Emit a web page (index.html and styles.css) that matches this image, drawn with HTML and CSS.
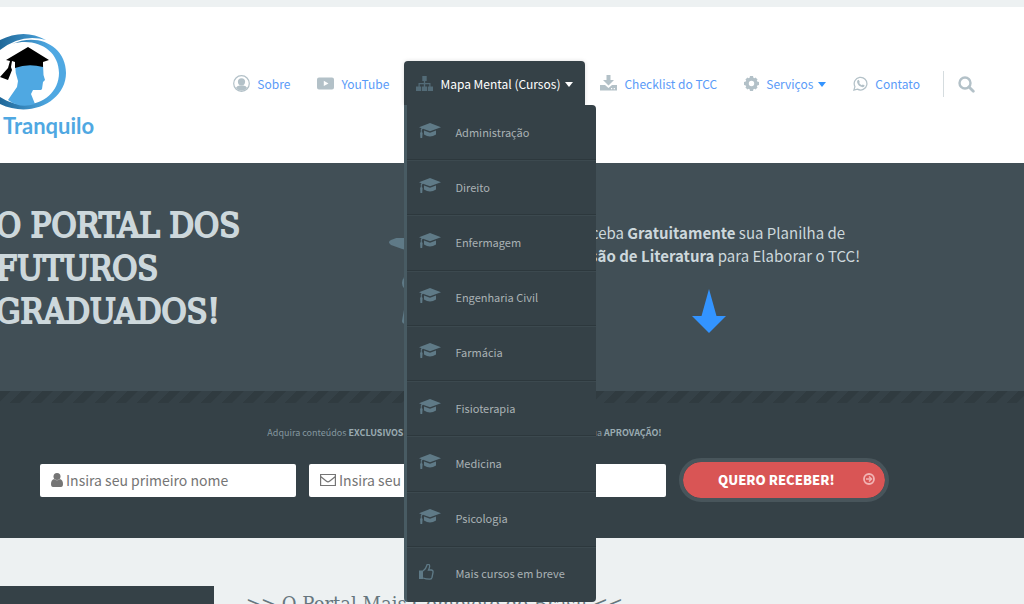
FILE: index.html
```html
<!DOCTYPE html>
<html lang="pt-BR">
<head>
<meta charset="utf-8">
<title>TCC Tranquilo</title>
<link rel="stylesheet" href="styles.css">
</head>
<body>
<svg class="sprite" aria-hidden="true">
  <symbol id="cap" viewBox="0 0 22 16"><path d="M11 0 22 4.2 11 8.2 4 5.7 2.8 6.8V9l.8 1-.4 5H1.400l-.3-5 .7-1V6.200L2.600 5.200 0 4.200Z"/><path d="M5 7.500 11 9.700 17 7.500V11.500Q11 15.500 5 11.500Z"/></symbol>
</svg>
<div class="page">
  <header class="header">
    <a class="logo" href="#">
      <svg class="logo-mark" viewBox="0 0 66 78" aria-hidden="true">
        <defs><linearGradient id="ring" gradientUnits="userSpaceOnUse" x1="0" x2="50" y1="0" y2="0"><stop offset="0" stop-color="#1f6899"/><stop offset="1" stop-color="#4fa8e2"/></linearGradient></defs>
        <path d="M0 7Q24-5 46 7 22 0 0 17Z" fill="url(#ring)"/>
        <path d="M12 11C38-1 66 13 66 40 66 68 31 86 0 71V64C28 82 59 66 59 40 59 17 36 4 12 11Z" fill="url(#ring)"/>
        <path d="M15 31H43L43.500 42 45 47 43 49 42 56 41 57H33L31 61 35 71Q20 76 8 67L17 54 18 48Q15 40 15 31Z" fill="#4fa8e2"/>
        <path d="M28 14 49 27 43 29V34Q28 30 15 35V29L12 28 11 34 12 37 8 47 0 44 8 35 10 28 6 27Z"/>
      </svg>
      <span class="logo-text">Tranquilo</span>
    </a>
    <nav class="nav">
      <a class="nav-item" href="#"><svg class="icon" viewBox="0 0 17 17"><circle cx="8.500" cy="8.500" r="7.800" fill="none" stroke="currentColor" stroke-width="1.200"/><circle cx="8.500" cy="6.800" r="3.600"/><path d="M2.800 13Q4 10.500 6.500 10.500H10.500Q13 10.500 14.200 13 8.500 18.500 2.800 13Z"/></svg>Sobre</a>
      <a class="nav-item" href="#"><svg class="icon" viewBox="0 0 17 17"><path fill-rule="evenodd" d="M2 2.500H15Q17 2.500 17 4.500V12.500Q17 14.500 15 14.500H2Q0 14.500 0 12.500V4.500Q0 2.500 2 2.500ZM6.800 5.800V11L11.500 8.400Z"/></svg>YouTube</a>
      <div class="nav-group">
        <a class="nav-item active" href="#"><svg class="icon" viewBox="0 0 17 17"><path d="M6.300 1H10.700V6H9.200V8H14.500V11.500H17V16H11.800V11.500H13.300V9.200H9.200V11.500H11V16H6V11.500H7.800V9.200H3.700V11.500H5.200V16H0V11.500H2.500V8H7.800V6H6.300Z"/></svg>Mapa Mental (Cursos)<span class="caret"></span></a>
        <ul class="menu">
          <li><a href="#"><svg class="cap"><use href="#cap"/></svg>Administração</a></li>
          <li><a href="#"><svg class="cap"><use href="#cap"/></svg>Direito</a></li>
          <li><a href="#"><svg class="cap"><use href="#cap"/></svg>Enfermagem</a></li>
          <li><a href="#"><svg class="cap"><use href="#cap"/></svg>Engenharia Civil</a></li>
          <li><a href="#"><svg class="cap"><use href="#cap"/></svg>Farmácia</a></li>
          <li><a href="#"><svg class="cap"><use href="#cap"/></svg>Fisioterapia</a></li>
          <li><a href="#"><svg class="cap"><use href="#cap"/></svg>Medicina</a></li>
          <li><a href="#"><svg class="cap"><use href="#cap"/></svg>Psicologia</a></li>
          <li><a href="#"><svg class="cap" viewBox="0 0 22 16"><path d="M0 6.500H4V15H0Z"/><path d="M4 7Q7 5 8 1Q8.500-.5 10 .5 11.500 2 9.500 6H12.500Q14.500 6.500 14 8.500L13 13.500Q12.500 15.200 10.500 15.200 7 15.200 4 14" fill="none" stroke="currentColor" stroke-width="1.300"/></svg>Mais cursos em breve</a></li>
        </ul>
      </div>
      <a class="nav-item" href="#"><svg class="icon" viewBox="0 0 17 17"><path fill-rule="evenodd" d="M6.500 0H10.500V5H14L8.500 10.500 3 5H6.500ZM0 10H5L8.500 13 12 10H17V15.500H0ZM11 13V14.200H12.200V13ZM13.700 13V14.200H14.900V13Z"/></svg>Checklist do TCC</a>
      <a class="nav-item" href="#"><svg class="icon small" viewBox="1 1 15 15"><circle cx="8.500" cy="8.500" r="4.400" fill="none" stroke="currentColor" stroke-width="3.400"/><path d="M7 1H10L10.500 3H6.500ZM7 16H10L10.500 14H6.500ZM1 7V10L3 10.500V6.500ZM16 7V10L14 10.500V6.500ZM2.400 4.500 4.500 2.400 7 4.200 4.200 7ZM14.600 4.500 12.500 2.400 10 4.200 12.800 7ZM2.400 12.500 4.500 14.600 7 12.800 4.200 10ZM14.600 12.500 12.500 14.600 10 12.800 12.800 10Z"/></svg>Serviços<span class="caret"></span></a>
      <a class="nav-item" href="#"><svg class="icon small" viewBox="0 0 17 17"><path d="M1 16 2.200 12A7.200 7.200 0 1 1 5 14.900Z" fill="none" stroke="currentColor" stroke-width="1.400"/><path d="M5.200 4.700 6.500 4.200 7.700 6.700 7 7.800Q8 9.600 10 10.400L11 9.500 13.200 10.600Q13 12.800 10.800 12.800 6 12 4.700 7.500 4.300 6 5.200 4.700Z"/></svg>Contato</a>
      <button class="search" type="button" aria-label="Buscar"><svg class="icon" viewBox="0 0 17 17"><circle cx="7" cy="7" r="5.500" fill="none" stroke="currentColor" stroke-width="2.400"/><path d="M11 11 15.300 15.300" stroke="currentColor" stroke-width="2.800" stroke-linecap="round"/></svg></button>
    </nav>
  </header>

  <section class="hero">
    <h1 class="hero-title">O PORTAL DOS<br>FUTUROS<br>GRADUADOS!</h1>
    <svg class="hero-figure" viewBox="0 0 40 90" aria-hidden="true"><path d="M2 2Q12-2 24-5V14Q12 11 2 7 -2 4 2 2Z"/><circle cx="21" cy="45" r="8"/><path d="M16 66 13 83Q13 86 17 86H30V66Z"/></svg>
    <div class="hero-offer">
      <p>Receba <b>Gratuitamente</b> sua Planilha de<br><b>Revisão de Literatura</b> para Elaborar o TCC!</p>
      <svg class="arrow" viewBox="0 0 34 44" aria-hidden="true"><path d="M17 0 24.500 27H34L17 44 0 27H9.500Z"/></svg>
    </div>
  </section>

  <section class="signup">
    <p class="signup-note">Adquira conteúdos <b>EXCLUSIVOS</b> e gratuitos que vão te ajudar a conquistar a sua <b>APROVAÇÃO!</b></p>
    <form class="signup-form">
      <label class="field"><svg viewBox="0 0 12 14"><circle cx="6" cy="3.500" r="3.500"/><path d="M3 6Q6 8.500 9 6 12 7 12 11 12 14 10 14H2Q0 14 0 11 0 7 3 6Z"/></svg><input type="text" placeholder="Insira seu primeiro nome" aria-label="Nome"></label>
      <label class="field"><svg class="mail" viewBox="0 0 16 14"><path d="M.6 1.500H15.400V12.500H.6ZM.6 3.500 6.500 8.300Q8 9.500 9.500 8.300L15.400 3.500" fill="none" stroke="currentColor" stroke-width="1.200"/></svg><input type="email" placeholder="Insira seu melhor e-mail" aria-label="E-mail"></label>
      <button class="submit" type="button">QUERO RECEBER!<svg viewBox="0 0 12 12" aria-hidden="true"><circle cx="6" cy="6" r="5" fill="none" stroke="currentColor" stroke-width="1.800"/><path d="M3 6H8.500M6 3.500 8.500 6 6 8.500" fill="none" stroke="currentColor" stroke-width="1.500"/></svg></button>
    </form>
  </section>

  <main class="content">
    <aside class="side"></aside>
    <h2 class="content-title">&gt;&gt; O Portal Mais Completo do Brasil &lt;&lt;</h2>
  </main>
</div>
</body>
</html>
```
FILE: styles.css
```css
* { box-sizing: border-box; }
body {
  margin: 0;
  font-family: "Noto Sans CJK JP", "Noto Sans", sans-serif;
  background: #edf1f2;
}
a { text-decoration: none; color: inherit; }
svg { fill: currentColor; flex: none; }
.sprite { position: absolute; width: 0; height: 0; }
.page { height: 100vh; overflow: hidden; }

.header {
  display: flex;
  justify-content: space-between;
  align-items: flex-start;
  height: 163px;
  padding-right: 49px;
  border-top: 7px solid #edf1f2;
  background: #fff;
}
.logo { display: flex; flex-direction: column; padding-top: 26px; color: #4fa8e2; }
.logo-mark { width: 66px; height: 78px; }
.logo-mark path:last-child { fill: #000; }
.logo-text {
  padding-left: 3px;
  font: bold 22px/30px Lato, sans-serif;
}
.nav { display: flex; padding-top: 54px; }
.nav-item {
  display: flex;
  align-items: center;
  height: 44px;
  padding: 0 15px 0 12px;
  font-size: 12px;
  white-space: nowrap;
  color: #5a9bf8;
}
.icon { width: 17px; height: 17px; margin-right: 7px; color: #b3c1c8; }
.small { width: 15px; height: 15px; }
.caret {
  margin: 3px 0 0 5px;
  border: 4px solid transparent;
  border-top: 5px solid #3394ff;
  border-bottom: 0;
}
.nav-group { position: relative; z-index: 2; margin-right: 3px; }
.active {
  padding-right: 12px;
  border-radius: 4px 4px 0 0;
  background: #354147;
  color: #fff;
  box-shadow: 0 0 4px #0002;
}
.active .icon { color: #536b77; }
.active .caret { border-top-color: #fff; }
.menu {
  position: absolute;
  top: 100%;
  left: 0;
  display: grid;
  width: 192px;
  min-height: 497px;
  margin: 0;
  padding: 0;
  list-style: none;
  border-left: 3px solid #485b63;
  border-radius: 0 4px 4px 4px;
  background: #354147;
}
.menu li { display: flex; border-bottom: 1px solid #2d383d; border-top: 1px solid #3c494f; }
.menu li:first-child { border-top-color: transparent; }
.menu li:last-child { border-bottom-color: transparent; }
.menu a { display: flex; align-items: center; padding-bottom: 2px; font-size: 11px; color: #aab2b5; }
.cap { width: 22px; height: 16px; margin: 0 14px 2px 12px; color: #5f7a87; }
.search {
  display: flex;
  align-items: center;
  height: 26px;
  margin: 10px 0 0 8px;
  padding: 0 0 0 14px;
  border: 0;
  border-left: 1px solid #d5dcdf;
  background: none;
}
.search .icon { margin: 0; }

.hero {
  position: relative;
  display: flex;
  justify-content: space-between;
  height: 228px;
  padding: 41px 164px 0 0;
  background: #414f56;
  color: #cdd8dc;
}
.hero-title {
  margin: 0 0 0 -4px;
  font: 34px/43px "DejaVu Serif Condensed", "DejaVu Serif", serif;
  -webkit-text-stroke: 2px currentColor;
  white-space: nowrap;
}
.hero-figure {
  position: absolute;
  left: 389px;
  top: 75px;
  width: 40px;
  height: 90px;
  color: #5f7a87;
}
.hero-offer { text-align: center; padding-top: 17px; }
.hero-offer p { margin: 0 0 22px; font-size: 15px; line-height: 23px; white-space: nowrap; }
.arrow { width: 34px; height: 44px; color: #3394ff; }

.signup {
  padding: 0 135px 0 40px;
  height: 147px;
  background: repeating-linear-gradient(135deg, #303b40 0 7px, #354147 8px 15px) 0 0 / 100% 12px no-repeat #354147;
}
.signup-note {
  margin: 0;
  padding-top: 33px;
  text-align: center;
  font-size: 9px;
  line-height: 18px;
  white-space: nowrap;
  color: #84979f;
}
.signup-note b { color: #9aabb2; }
.signup-form {
  display: grid;
  grid-template-columns: 256fr 357fr 210px;
  gap: 13px;
  align-items: center;
  margin-top: 16px;
}
.field {
  display: flex;
  align-items: center;
  gap: 3px;
  height: 33px;
  padding: 0 11px;
  border-radius: 2px;
  background: #fff;
  color: #757575;
}
.field svg { width: 12px; height: 14px; }
.field .mail { width: 16px; }
.field input {
  flex: 1;
  min-width: 0;
  padding: 0;
  border: 0;
  outline: 0;
  background: none;
  font: 14px/24px "Noto Sans CJK JP", sans-serif;
}
.submit {
  display: flex;
  align-items: center;
  justify-content: space-between;
  height: 44px;
  padding: 0 10px 0 35px;
  border: 4px solid #48555b;
  border-radius: 22px;
  background: #d95555;
  background-clip: padding-box;
  color: #fff;
  font: 900 13px/20px "Noto Sans CJK JP", sans-serif;
}
.submit svg { width: 12px; height: 12px; margin-bottom: 3px; color: #f2b4b4; }

.content { display: flex; align-items: flex-start; gap: 32px; padding-top: 48px; }
.side { width: 214px; height: 60px; background: #354147; }
.content-title {
  margin: 4px 0 0;
  font: 20px/28px "DejaVu Serif Condensed", "DejaVu Serif", serif;
  color: #66767e;
  white-space: nowrap;
}
```
